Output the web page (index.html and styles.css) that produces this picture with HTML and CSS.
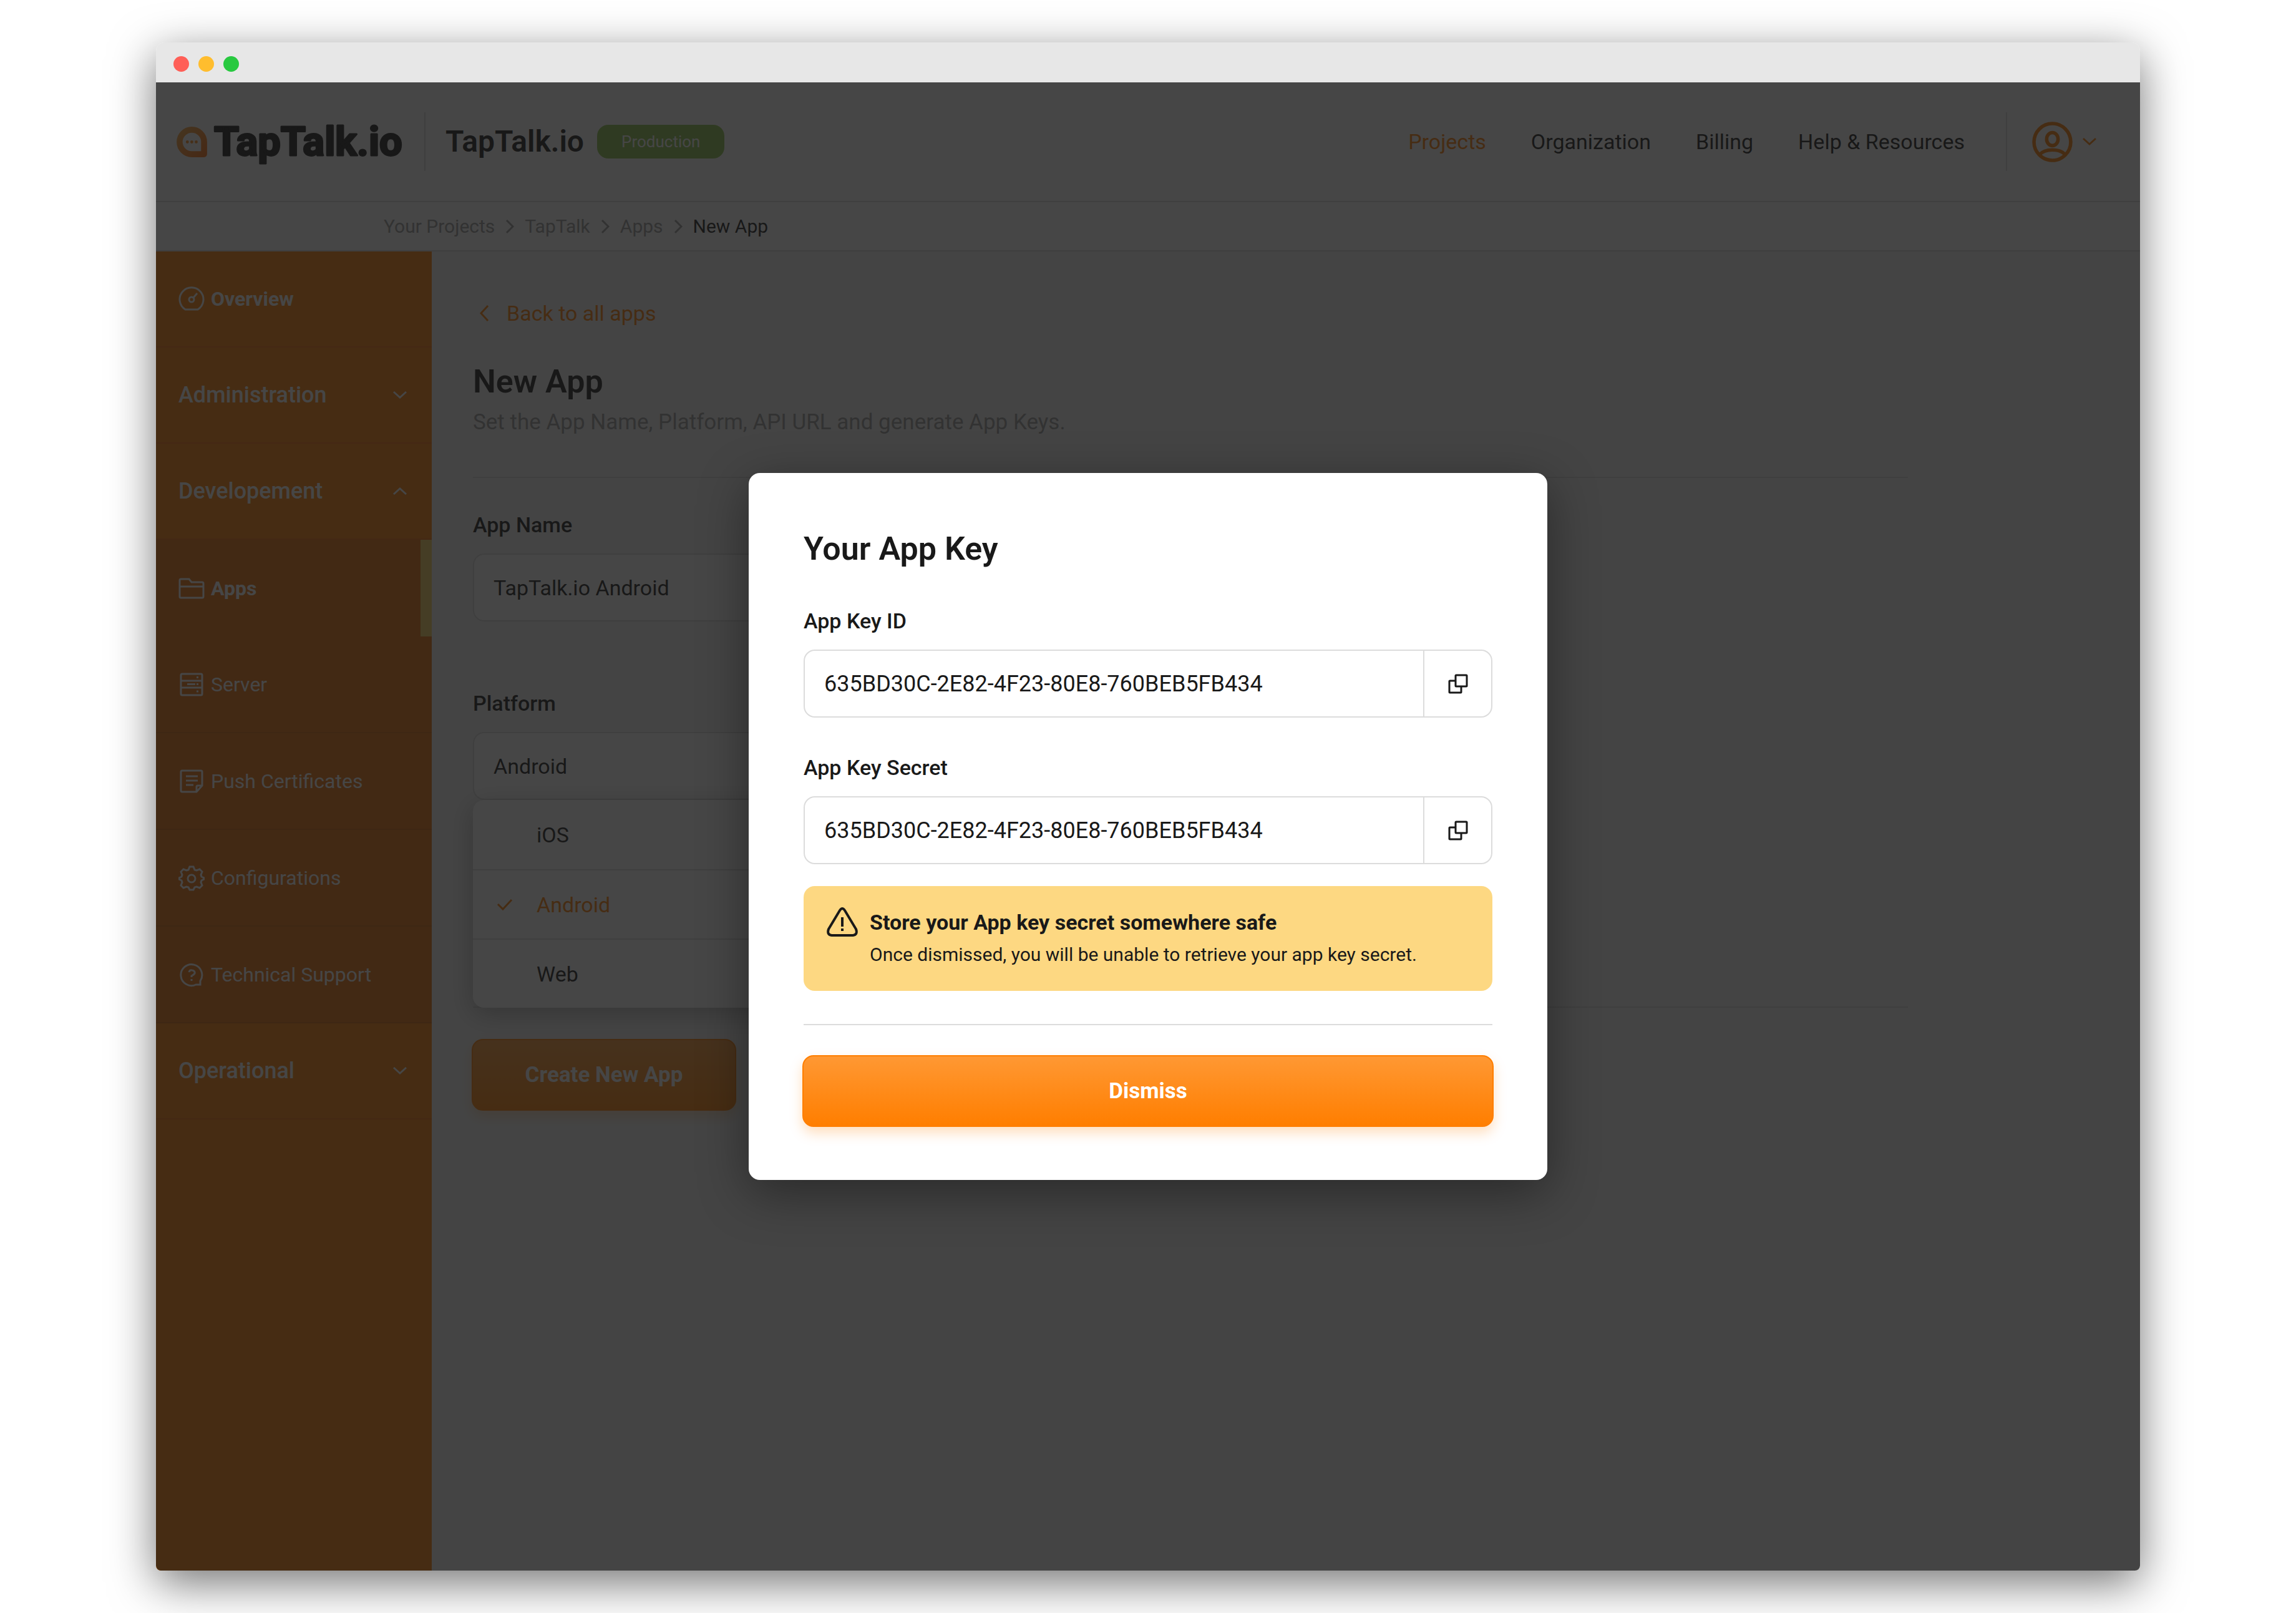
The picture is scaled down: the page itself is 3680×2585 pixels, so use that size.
FILE: index.html
```html
<!DOCTYPE html>
<html lang="en">
<head>
    <meta charset="UTF-8">
    <meta name="viewport" content="width=device-width, initial-scale=1.0">
    <title>New App - TapTalk.io</title>

<link rel="stylesheet" href="styles.css">

</head>
<body>
    <div class="window">
        <div class="titlebar">
            <span class="dot red"></span>
            <span class="dot yellow"></span>
            <span class="dot green"></span>
        </div>

        <div class="screen">
            <header class="header">
                <a href="#" class="logo">
                    <svg width="49" height="49" viewBox="0 0 49 49">
                        <defs>
                            <linearGradient id="logoFill" x1="0" y1="0" x2="1" y2="1">
                                <stop offset="0" stop-color="#f9a640"/>
                                <stop offset="1" stop-color="#ff7010"/>
                            </linearGradient>
                        </defs>
                        <path d="M24.500 4.900a19.600 19.600 0 0 0 0 39.200h19.600v-19.600a19.600 19.600 0 0 0-19.600-19.600z" fill="none" stroke="url(#logoFill)" stroke-width="9.600" stroke-linejoin="round"/>
                        <circle cx="17.300" cy="24.500" r="2.400" fill="#ff8a1c"/>
                        <circle cx="24.400" cy="24.500" r="2.400" fill="#ff8a1c"/>
                        <circle cx="31.500" cy="24.500" r="2.400" fill="#ff8a1c"/>
                    </svg>
                    <svg class="wordmark" width="306" height="80" viewBox="0 0 306 80">
                        <text x="1" y="62">TapTalk.io</text>
                    </svg>
                </a>
                <span class="divider"></span>
                <span class="project-name">TapTalk.io</span>
                <span class="badge">Production</span>

                <nav class="nav">
                    <a href="#" class="active">Projects</a>
                    <a href="#">Organization</a>
                    <a href="#">Billing</a>
                    <a href="#">Help &amp; Resources</a>
                </nav>
                <span class="divider"></span>
                <button class="account" aria-label="Account">
                    <svg width="65" height="65" viewBox="0 0 64 64" fill="none" stroke="#ff7e00" stroke-width="5.500">
                        <circle cx="32" cy="32" r="29"/>
                        <ellipse cx="32" cy="27.500" rx="9" ry="10.300"/>
                        <path d="M12 52c4-5 10-7.500 20-7.500s16 2.500 20 7.500"/>
                    </svg>
                    <svg width="22" height="14" viewBox="0 0 22 14" fill="none" stroke="#ff7e00" stroke-width="3">
                        <path d="M1 2l10 9 10-9"/>
                    </svg>
                </button>
            </header>

            <nav class="breadcrumb">
                <a href="#">Your Projects</a>
                <svg width="14" height="22" viewBox="0 0 14 22"><path d="M2 1l10 10-10 10"/></svg>
                <a href="#">TapTalk</a>
                <svg width="14" height="22" viewBox="0 0 14 22"><path d="M2 1l10 10-10 10"/></svg>
                <a href="#">Apps</a>
                <svg width="14" height="22" viewBox="0 0 14 22"><path d="M2 1l10 10-10 10"/></svg>
                <span>New App</span>
            </nav>

            <div class="content">
                <aside class="sidebar">
                    <a href="#" class="menu-item overview">
                        <svg width="42" height="42" viewBox="0 0 42 42">
                            <path d="M11 38a19 19 0 1 1 20 0z"/>
                            <circle cx="21" cy="22" r="4"/>
                            <path d="M24 19l6-7"/>
                        </svg>
                        Overview
                    </a>
                    <button class="menu-item">
                        Administration
                        <svg width="24" height="14" viewBox="0 0 24 14"><path d="M2 2l10 9 10-9"/></svg>
                    </button>
                    <button class="menu-item">
                        Developement
                        <svg width="24" height="14" viewBox="0 0 24 14"><path d="M2 12l10-9 10 9"/></svg>
                    </button>
                    <div class="submenu">
                        <a href="#" class="active">
                            <svg width="42" height="42" viewBox="0 0 42 42">
                                <path d="M2 8q0-2 2-2h13l4 5h17q2 0 2 2v21q0 2-2 2H4q-2 0-2-2zM2 18h38"/>
                            </svg>
                            Apps
                        </a>
                        <a href="#">
                            <svg width="42" height="42" viewBox="0 0 42 42">
                                <rect x="4" y="4" width="34" height="34" rx="2"/>
                                <path d="M4 15h34M4 26h34M14 20.500h13M29 20.500h3M29 9.500h3M29 32h3"/>
                            </svg>
                            Server
                        </a>
                        <a href="#">
                            <svg width="42" height="42" viewBox="0 0 42 42">
                                <path d="M6 4h30q2 0 2 2v22L29 38H6q-2 0-2-2V6q0-2 2-2zM29 38v-8q0-2 2-2h7M12 13h19M12 20h19M12 27h12"/>
                            </svg>
                            Push Certificates
                        </a>
                        <a href="#">
                            <svg width="42" height="42" viewBox="0 0 42 42">
                                <path d="M18 3h6l2 5 3 1 5-2 4 4-2 5 1 3 4 2v2l-4 2-1 3 2 5-4 4-5-2-3 1-2 4h-6l-2-4-3-1-5 2-4-4 2-5-1-3-4-2v-2l4-2 1-3-2-5 4-4 5 2 3-1z"/>
                                <circle cx="21" cy="22" r="6"/>
                            </svg>
                            Configurations
                        </a>
                        <a href="#">
                            <svg width="42" height="42" viewBox="0 0 42 42">
                                <path d="M28 37a17 17 0 1 1 7-6v6z"/>
                                <path d="M17 17q1-4 5-3 5 1 4 5-1 2-5 4v2M21 28v3"/>
                            </svg>
                            Technical Support
                        </a>
                    </div>
                    <button class="menu-item">
                        Operational
                        <svg width="24" height="14" viewBox="0 0 24 14"><path d="M2 2l10 9 10-9"/></svg>
                    </button>
                </aside>

                <main class="main">
                    <a href="#" class="back">
                        <svg width="16" height="26" viewBox="0 0 16 26"><path d="M14 1L3 13l11 12"/></svg>
                        Back to all apps
                    </a>
                    <h1>New App</h1>
                    <p class="subtitle">Set the App Name, Platform, API URL and generate App Keys.</p>

                    <form class="app-form">
                        <div class="field">
                            <label for="appName">App Name</label>
                            <input type="text" id="appName" value="TapTalk.io Android">
                        </div>
                        <div class="field platform">
                            <label for="platform">Platform</label>
                            <select id="platform">
                                <option>iOS</option>
                                <option selected>Android</option>
                                <option>Web</option>
                            </select>
                            <ul class="options">
                                <li>iOS</li>
                                <li class="selected">
                                    <svg width="26" height="20" viewBox="0 0 26 20"><path d="M2 9l8 8L24 2"/></svg>
                                    Android
                                </li>
                                <li>Web</li>
                            </ul>
                        </div>
                    </form>
                    <button class="btn create">Create New App</button>
                </main>
            </div>

            <div class="overlay">
                <div class="modal" role="dialog" aria-labelledby="modalTitle">
                    <h2 id="modalTitle">Your App Key</h2>
                    <div class="field">
                        <label for="keyId">App Key ID</label>
                        <div class="copy-box">
                            <input type="text" id="keyId" value="635BD30C-2E82-4F23-80E8-760BEB5FB434" readonly>
                            <button aria-label="Copy App Key ID">
                                <svg width="32" height="32" viewBox="0 0 32 32">
                                    <rect x="12" y="2" width="18" height="18" rx="1"/>
                                    <path d="M12 11H3q-1 0-1 1v17q0 1 1 1h17q1 0 1-1v-9"/>
                                </svg>
                            </button>
                        </div>
                    </div>
                    <div class="field">
                        <label for="keySecret">App Key Secret</label>
                        <div class="copy-box">
                            <input type="text" id="keySecret" value="635BD30C-2E82-4F23-80E8-760BEB5FB434" readonly>
                            <button aria-label="Copy App Key Secret">
                                <svg width="32" height="32" viewBox="0 0 32 32">
                                    <rect x="12" y="2" width="18" height="18" rx="1"/>
                                    <path d="M12 11H3q-1 0-1 1v17q0 1 1 1h17q1 0 1-1v-9"/>
                                </svg>
                            </button>
                        </div>
                    </div>
                    <div class="warning">
                        <svg width="50" height="52" viewBox="0 0 50 52">
                            <path d="M21 7q4-6 8 0l18 30q3 9-5 10H8q-8-1-5-10z"/>
                            <path d="M25 18v15M25 36v4"/>
                        </svg>
                        <div>
                            <strong>Store your App key secret somewhere safe</strong>
                            <p>Once dismissed, you will be unable to retrieve your app key secret.</p>
                        </div>
                    </div>
                    <hr>
                    <button class="btn dismiss">Dismiss</button>
                </div>
            </div>
        </div>
    </div>
</body>
</html>
```

FILE: styles.css
```css
* {
    box-sizing: border-box;
}

body {
    margin: 0;
    padding: 68px 250px;
    min-height: 100vh;
    display: flex;
    background-color: #ffffff;
    color: #191919;
    font-family: Roboto, 'Liberation Sans', sans-serif;
    font-size: 34px;
    line-height: 40px;
}

a {
    color: inherit;
    text-decoration: none;
}

button,
input,
select {
    font: inherit;
    color: inherit;
    cursor: pointer;
}

svg {
    flex: none;
    fill: none;
}

/* Browser window */
.window {
    flex: 1;
    display: flex;
    flex-direction: column;
    border-radius: 14px 14px 8px 8px;
    overflow: hidden;
    box-shadow: 0 20px 72px rgba(0, 0, 0, 0.55);
}

.titlebar {
    display: flex;
    align-items: center;
    gap: 15px;
    height: 64px;
    padding: 4px 28px 0;
    background-color: #e7e7e7;
}

.dot {
    width: 25px;
    height: 25px;
    border-radius: 50%;
}

.red {
    background-color: #ff5f57;
}

.yellow {
    background-color: #ffbd2e;
}

.green {
    background-color: #28c940;
}

.screen {
    position: relative;
    flex: 1;
    display: flex;
    flex-direction: column;
}

/* Header */
.header {
    display: flex;
    align-items: center;
    height: 192px;
    padding: 0 70px 0 33px;
    border-bottom: 2px solid #dcdcdc;
    background-color: #ffffff;
}

.logo {
    display: flex;
    align-items: center;
    gap: 10px;
}

.wordmark text {
    font-size: 65px;
    font-weight: 700;
    fill: #191919;
    stroke: #191919;
    stroke-width: 3;
    stroke-linejoin: round;
}

.divider {
    width: 2px;
    height: 94px;
    margin: 0 32px;
    background-color: #dcdcdc;
}

.project-name {
    font-size: 48px;
    font-weight: 600;
}

.badge {
    margin-left: 21px;
    padding: 7px 39px;
    border-radius: 18px;
    background-color: #8bc34a;
    color: #ffffff;
    font-size: 26px;
}

.nav {
    display: flex;
    gap: 72px;
    margin-left: auto;
    margin-right: 34px;
}

.nav .active {
    color: #ff7e00;
}

.account {
    display: flex;
    align-items: center;
    gap: 16px;
    margin-left: 8px;
    padding: 0;
    border: 0;
    background: none;
}

.breadcrumb {
    display: flex;
    align-items: center;
    gap: 17px;
    height: 79px;
    padding-left: 365px;
    border-bottom: 2px solid #dcdcdc;
    background-color: #ffffff;
    font-size: 30px;
}

.breadcrumb a {
    color: #9b9b9b;
}

.breadcrumb svg {
    stroke: #9b9b9b;
    stroke-width: 3;
}

.content {
    flex: 1;
    display: flex;
    background-color: #f5f5f5;
}

/* Sidebar */
.sidebar {
    width: 442px;
    background-color: #ff7e00;
    color: #ffffff;
}

.sidebar svg {
    stroke: #ffffff;
    stroke-width: 3;
}

.menu-item {
    display: flex;
    align-items: center;
    justify-content: space-between;
    width: 100%;
    height: 154px;
    padding: 0 39px 0 36px;
    border: 0;
    border-bottom: 2px solid #f26a05;
    background: none;
    font-size: 36px;
    font-weight: 500;
}

.overview {
    justify-content: flex-start;
    gap: 10px;
    font-size: 32px;
    font-weight: 700;
}

.submenu {
    background-color: #ea6d09;
}

.submenu a {
    display: flex;
    align-items: center;
    gap: 10px;
    height: 155px;
    padding-left: 36px;
    border-bottom: 2px solid #d66608;
    font-size: 32px;
}

.submenu .active {
    border-right: 18px solid #fad059;
    border-bottom: 0;
    font-weight: 700;
}

/* Main */
.main {
    flex: 1;
    max-width: 2366px;
    padding: 79px 0 79px 66px;
}

.back {
    display: flex;
    align-items: center;
    gap: 28px;
    margin-bottom: 60px;
    padding-left: 10px;
    color: #ff7e00;
}

.back svg,
.options svg {
    stroke: #ff7e00;
    stroke-width: 3;
}

h1,
h2 {
    margin: 0;
    font-size: 52px;
    line-height: 60px;
    font-weight: 600;
}

.subtitle {
    margin: 15px 0 67px;
    color: #9b9b9b;
    font-size: 35px;
}

.app-form {
    display: flex;
    flex-direction: column;
    gap: 111px;
    margin-bottom: 50px;
    padding: 55px 0 331px;
    border-top: 2px solid #dcdcdc;
    border-bottom: 2px solid #dcdcdc;
}

.field {
    display: flex;
    flex-direction: column;
    gap: 26px;
}

.field label {
    font-weight: 500;
}

.app-form .field {
    width: 49%;
}

.app-form input,
.app-form select,
.copy-box {
    width: 100%;
    height: 109px;
    border: 2px solid #dcdcdc;
    border-radius: 18px;
    background-color: #ffffff;
}

.app-form input,
.app-form select {
    appearance: none;
    padding: 0 31px;
}

.platform {
    position: relative;
}

.options {
    position: absolute;
    top: 100%;
    left: 0;
    width: 100%;
    margin: 0;
    padding: 0;
    border-radius: 18px;
    background-color: #ffffff;
    box-shadow: 0 10px 40px rgba(0, 0, 0, 0.3);
    list-style: none;
}

.options li {
    display: flex;
    align-items: center;
    height: 111px;
    padding-left: 102px;
}

.options li + li {
    border-top: 2px solid #dcdcdc;
}

.options .selected {
    gap: 38px;
    padding-left: 38px;
    color: #ff7e00;
}

.btn {
    height: 115px;
    border: 2px solid #ff7e00;
    border-radius: 18px;
    background-image: linear-gradient(#ff9833, #ff7e00);
    box-shadow: 0 10px 20px rgba(255, 126, 0, 0.25);
    color: #ffffff;
    font-size: 35px;
    font-weight: 700;
}

.create {
    width: 424px;
    margin-left: -2px;
}

/* Modal */
.overlay {
    position: absolute;
    inset: 0;
    display: flex;
    align-items: center;
    justify-content: center;
    background-color: rgba(24, 24, 24, 0.8);
}

.modal {
    width: 1280px;
    padding: 92px 88px 85px;
    border-radius: 18px;
    background-color: #ffffff;
    box-shadow: 0 20px 80px rgba(0, 0, 0, 0.4);
}

.modal h2 {
    margin-bottom: 65px;
}

.modal .field + .field {
    margin-top: 60px;
}

.copy-box {
    display: flex;
}

.copy-box input {
    flex: 1;
    min-width: 0;
    padding: 0 31px;
    border: 0;
    background: none;
    font-size: 36px;
}

.copy-box button {
    display: flex;
    align-items: center;
    justify-content: center;
    width: 109px;
    padding: 0;
    border: 0;
    border-left: 2px solid #dcdcdc;
    background: none;
}

.copy-box svg {
    stroke: #191919;
    stroke-width: 3;
}

.warning {
    display: flex;
    gap: 19px;
    margin-top: 35px;
    padding: 32px 37px;
    border-radius: 18px;
    background-color: #fdd882;
    line-height: 52px;
}

.warning svg {
    stroke: #191919;
    stroke-width: 4;
}

.warning p {
    margin: 0;
    font-size: 30px;
}

.modal hr {
    height: 2px;
    margin: 53px 0 48px;
    border: 0;
    background-color: #dcdcdc;
}

.dismiss {
    display: block;
    width: calc(100% + 4px);
    margin: 0 -2px;
}
```
